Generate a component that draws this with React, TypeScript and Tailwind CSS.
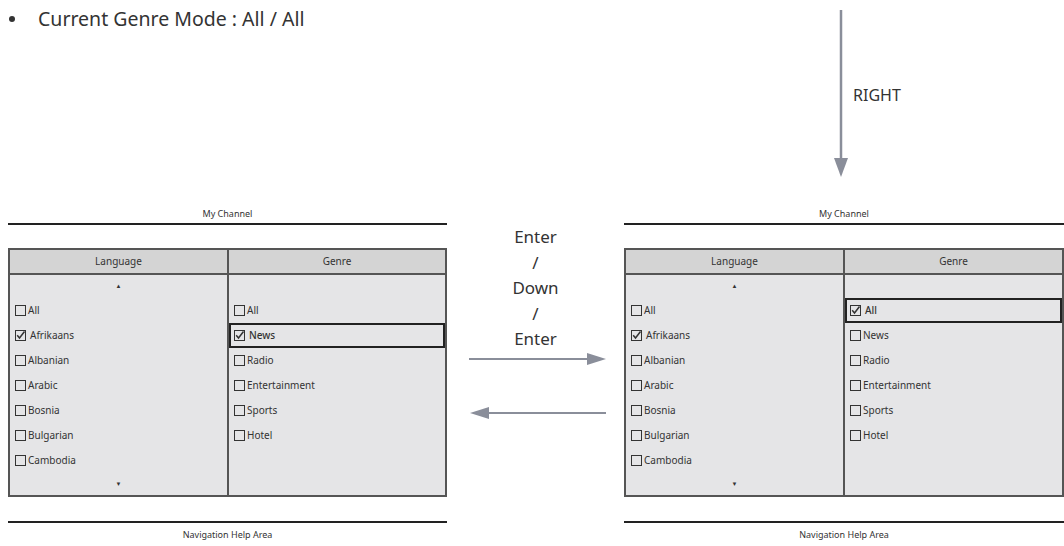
import React from "react";

const font = { fontFamily: '"Noto Sans", "Open Sans", sans-serif' };

function Box({ checked }: { checked?: boolean }) {
  return (
    <svg width="11" height="11" viewBox="0 0 11 11" className="mr-[2px] shrink-0">
      <rect x="0.5" y="0.5" width="10" height="10" fill="none" stroke="#333" strokeWidth="1" />
      {checked && <path d="M2.2 5.2 L4.5 8 L9.5 1.5" fill="none" stroke="#333" strokeWidth="1.5" />}
    </svg>
  );
}

function Row({ label, checked, selected }: { label: string; checked?: boolean; selected?: boolean }) {
  return (
    <div
      className={
        "h-[25px] flex items-center text-[10px] text-[#333] " +
        (selected ? "border-2 border-[#222] pl-[3px] font-medium" : "pl-[5px]")
      }
    >
      <Box checked={checked} />
      <span className={checked ? "ml-[2px]" : ""}>{label}</span>
    </div>
  );
}

const langs = ["All", "Afrikaans", "Albanian", "Arabic", "Bosnia", "Bulgarian", "Cambodia"];
const genres = ["All", "News", "Radio", "Entertainment", "Sports", "Hotel"];

function Panel({ selGenre, width }: { selGenre: number; width: string }) {
  return (
    <div className={"flex flex-col " + width}>
      <div className="h-[18px] text-center text-[9px] text-[#333] leading-[18px]">My Channel</div>
      <div className="h-[2px] bg-[#222]" />
      <div className="h-[23px]" />
      <div className="border-2 border-[#555] flex">
        <div className="w-[219px] flex flex-col border-r-2 border-[#555] bg-[#e5e5e7]">
          <div className="h-[25px] bg-[#d4d4d4] border-b-2 border-[#555] flex items-center justify-center text-[10px] text-[#333]">
            Language
          </div>
          <div className="h-[23px] flex items-center justify-center text-[6px] text-[#333]">▲</div>
          {langs.map((l, i) => (
            <Row key={l} label={l} checked={i === 1} />
          ))}
          <div className="h-[22px] flex items-center justify-center text-[6px] text-[#333]">▼</div>
        </div>
        <div className="flex-1 flex flex-col bg-[#e5e5e7]">
          <div className="h-[25px] bg-[#d4d4d4] border-b-2 border-[#555] flex items-center justify-center text-[10px] text-[#333]">
            Genre
          </div>
          <div className="h-[23px]" />
          {genres.map((g, i) => (
            <Row key={g} label={g} checked={i === selGenre} selected={i === selGenre} />
          ))}
        </div>
      </div>
      <div className="h-[24px]" />
      <div className="h-[2px] bg-[#222]" />
      <div className="h-[24px] text-center text-[9px] text-[#333] leading-[24px]">Navigation Help Area</div>
    </div>
  );
}

function HArrow({ dir }: { dir: "right" | "left" }) {
  return (
    <svg width="138" height="14" viewBox="0 0 138 14">
      {dir === "right" ? (
        <>
          <line x1="0" y1="7" x2="120" y2="7" stroke="#8a8e9a" strokeWidth="2" />
          <polygon points="118,1 137,7 118,13" fill="#8a8e9a" />
        </>
      ) : (
        <>
          <line x1="18" y1="7" x2="137" y2="7" stroke="#8a8e9a" strokeWidth="2" />
          <polygon points="20,1 1,7 20,13" fill="#8a8e9a" />
        </>
      )}
    </svg>
  );
}

export default function App() {
  return (
    <div className="w-[1064px] h-[546px] bg-white overflow-hidden relative" style={font}>
      <div className="flex h-[205px]">
        <div className="w-[830px] pl-[9px] pt-[4px]">
          <div className="flex items-center text-[19.5px] text-[#333]">
            <span className="w-[29px] flex">
              <span className="w-[6px] h-[6px] rounded-full bg-[#333]" />
            </span>
            <span>Current Genre Mode : All / All</span>
          </div>
        </div>
        <div className="flex pt-[10px]">
          <svg width="22" height="168" viewBox="0 0 22 168">
            <line x1="11" y1="0" x2="11" y2="152" stroke="#8a8e9a" strokeWidth="2.5" />
            <polygon points="4,148 18,148 11,167" fill="#8a8e9a" />
          </svg>
          <div className="ml-[1px] mt-[73px] text-[16px] text-[#333] leading-[24px]">RIGHT</div>
        </div>
      </div>
      <div className="flex">
        <div className="pl-[8px]">
          <Panel selGenre={1} width="w-[439px]" />
        </div>
        <div className="w-[179px] flex flex-col items-center">
          <div className="mt-[19px] flex flex-col items-center text-[17px] text-[#333] leading-[25.5px]">
            <span>Enter</span>
            <span>/</span>
            <span>Down</span>
            <span>/</span>
            <span>Enter</span>
          </div>
          <div className="mt-[0px] ml-[5px]">
            <HArrow dir="right" />
          </div>
          <div className="mt-[40px] ml-[5px]">
            <HArrow dir="left" />
          </div>
        </div>
        <div>
          <Panel selGenre={0} width="w-[440px]" />
        </div>
      </div>
    </div>
  );
}
